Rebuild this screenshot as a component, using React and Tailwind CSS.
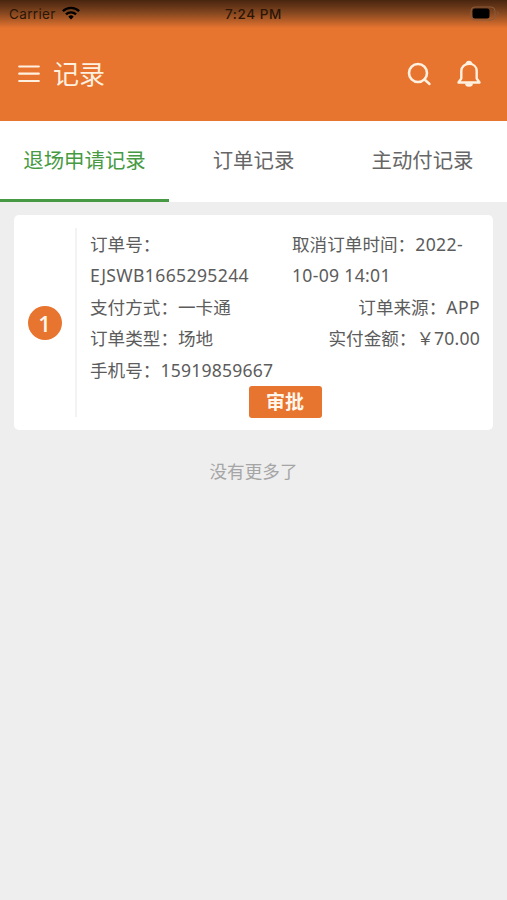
const tabs = [
  { label: '退场申请记录', active: true },
  { label: '订单记录' },
  { label: '主动付记录' },
];

function StatusBar() {
  return (
    <div className="grid h-7 grid-cols-3 bg-linear-to-b from-[#48250f] via-[#83461f] via-45% to-[#e7742f] px-2 font-['Inter',sans-serif] text-[13.5px] leading-7 text-[#2b1608]">
      <div className="flex items-center gap-[6px] pl-px">
        <span className="tracking-[0.35px]">Carrier</span>
        <svg className="-mt-[2px]" width="18" height="14" viewBox="0 0 18 14" fill="none" stroke="#000" strokeWidth="2.4">
          <path d="M.9 5.2a11.5 11.5 0 0 1 16.2 0M4 8.4a7.1 7.1 0 0 1 10 0" />
          <path d="M6.3 10.7a3.8 3.8 0 0 1 5.4 0L9 13.5z" fill="#000" stroke="none" />
        </svg>
      </div>
      <div className="text-center font-medium tracking-[0.6px]">7:24 PM</div>
      <div className="flex items-center justify-end">
        <svg className="-mt-[2px]" width="29" height="15" viewBox="0 0 29 15" fill="none">
          <rect x="1" y="1" width="24" height="13" rx="4" stroke="#8a5a3d" />
          <rect x="2.5" y="2.5" width="17" height="10" rx="2.5" fill="#000" />
          <path d="M27 5.5c1.5.8 1.5 3.2 0 4" stroke="#8a5a3d" />
        </svg>
      </div>
    </div>
  );
}

function Header() {
  return (
    <div className="flex h-[91px] items-center px-[18px] text-[#fff0df]">
      <svg width="22" height="20" viewBox="0 0 22 20" stroke="currentColor" strokeWidth="2.2" strokeLinecap="round">
        <path d="M1.2 2.5h19.6M1.2 9.7h19.6M1.2 17h19.6" />
      </svg>
      <h1 className="ml-[13px] flex-1 text-[26px] leading-none">记录</h1>
      <svg className="mr-[25px]" width="25" height="26" viewBox="0 0 25 26" fill="none" stroke="currentColor" strokeWidth="2.6" strokeLinecap="round">
        <circle cx="11" cy="12" r="9" />
        <path d="M17.8 18.7l4.6 4.2" />
      </svg>
      <svg className="mr-[8px]" width="24" height="28" viewBox="0 0 24 28" fill="none" stroke="currentColor" strokeWidth="2.4" strokeLinejoin="round">
        <path d="M1.5 22.5l2.8-4V11c0-4.4 3.4-7.1 7.7-7.1s7.7 2.7 7.7 7.1v7.5l2.8 4z" />
        <path d="M8.6 4.4a3.4 3.6 0 0 1 6.8 0zM8 23.2a4 3.6 0 0 0 8 0z" fill="currentColor" stroke="none" />
      </svg>
    </div>
  );
}

function RecordCard() {
  return (
    <div className="mx-[14px] mt-[13px] flex h-[215px] rounded-[5px] bg-white py-[13px] pr-[13px]">
      <div className="flex w-[63px] items-center justify-center border-r-2 border-[#f3f3f3]">
        <div className="flex h-[34px] w-[34px] items-center justify-center rounded-full bg-[#e7742f] pt-px font-['Open_Sans',sans-serif] text-[22px] font-semibold text-[#fff6ec]">1</div>
      </div>
      <div className="flex-1 pt-px pl-[13px] text-[17.6px] leading-[31.4px] text-[#5c5c5c]">
        <div className="flex justify-between">
          <div>
            <p>订单号：</p>
            <p className="tracking-[0.35px]">EJSWB1665295244</p>
          </div>
          <div className="w-[188px]">
            <p className="whitespace-nowrap">取消订单时间：<span className="tracking-[0.4px]">2022-</span></p>
            <p className="tracking-[0.3px]">10-09 14:01</p>
          </div>
        </div>
        <div className="flex justify-between">
          <span>支付方式：一卡通</span>
          <span>订单来源：<span className="tracking-[0.4px]">APP</span></span>
        </div>
        <div className="flex justify-between">
          <span>订单类型：场地</span>
          <span>实付金额：￥<span className="tracking-[0.2px]">70.00</span></span>
        </div>
        <p>手机号：<span className="tracking-[0.2px]">15919859667</span></p>
        <button className="mx-auto block h-8 w-[73px] rounded-[3px] bg-[#e7742f] text-[19px] leading-8 font-bold text-[#fff6ec]">审批</button>
      </div>
    </div>
  );
}

export default function App() {
  return (
    <div lang="zh-CN" className="min-h-screen bg-[#eeeeee] font-['Noto_Sans','Noto_Sans_CJK_SC',sans-serif]">
      <div className="h-[121px] bg-[#e7742f]">
        <StatusBar />
        <Header />
      </div>
      <div className="grid h-[81px] grid-cols-3 bg-white">
        {tabs.map((tab) => (
          <div
            key={tab.label}
            className={
              tab.active
                ? 'border-b-3 border-[#479a43] text-center text-[20.4px] leading-[78px] text-[#479a43]'
                : 'text-center text-[20.4px] leading-[78px] text-[#666666]'
            }
          >
            {tab.label}
          </div>
        ))}
      </div>
      <RecordCard />
      <p className="mt-[26px] text-center text-[17.6px] leading-[30px] text-[#a5a5a5]">没有更多了</p>
    </div>
  );
}
